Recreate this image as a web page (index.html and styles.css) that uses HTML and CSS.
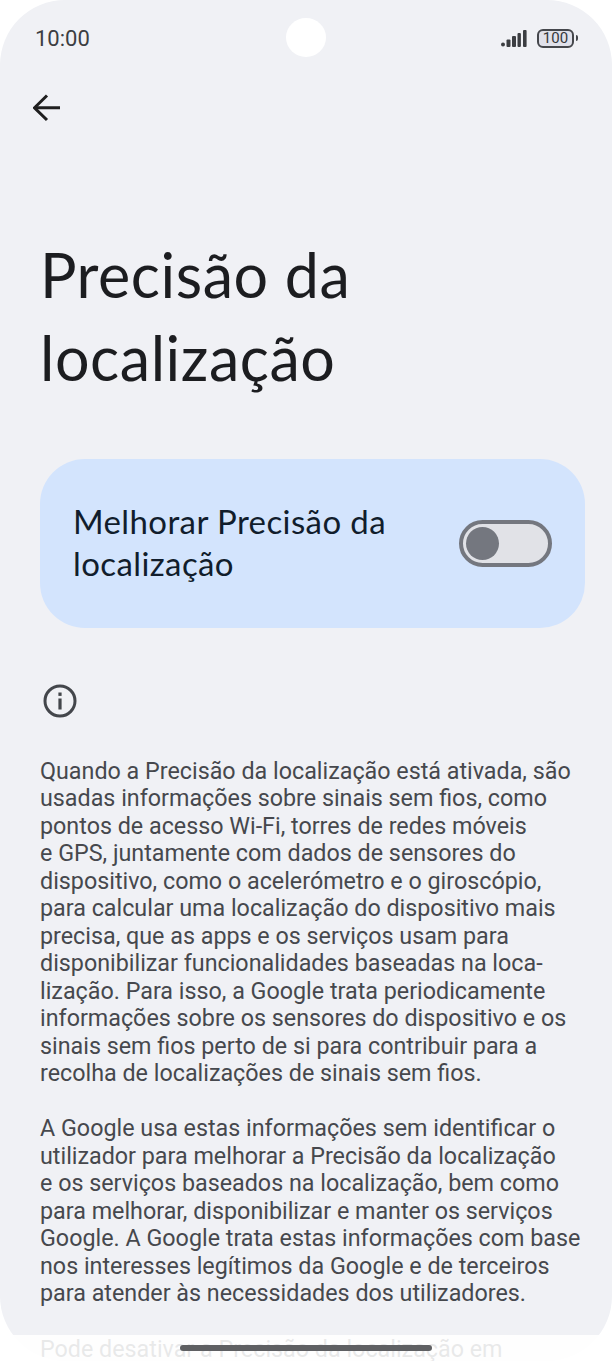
FILE: index.html
```html
<!DOCTYPE html>
<html>

<head>
  <meta charset="utf-8">
  <meta content="width=device-width, initial-scale=1">
  <link rel="stylesheet" href="styles.css">
</head>

<body>
  <div class="screen">
    <div class="statusbar">
      <span class="clock">10:00</span>
      <span class="camera"></span>
      <span class="status-icons">
        <svg class="signal" width="26" height="17" viewBox="0 0 26 17">
          <rect x="0" y="12.5" width="4" height="4" rx="2" />
          <rect x="5.5" y="9.5" width="4" height="7.5" rx="1" />
          <rect x="11" y="6" width="4" height="11" rx="1" />
          <rect x="16.5" y="3" width="3.4" height="14" rx="1" />
          <rect x="22" y="0" width="3.6" height="17" rx="1" />
        </svg>
        <span class="battery"><span class="battery-level">100</span></span>
        <span class="battery-tip"></span>
      </span>
    </div>

    <div class="toolbar">
      <svg width="28" height="28" viewBox="0 0 28 28" fill="none" stroke="#1f1f1f" stroke-width="3">
        <path d="M27 13.8H2" />
        <path d="M14 1.5L1.5 13.8L14 26" />
      </svg>
    </div>

    <h1 class="title">Precisão da<br>localização</h1>

    <div class="card">
      <span class="card-label">Melhorar Precisão da<br>localização</span>
      <span class="switch"><span class="knob"></span></span>
    </div>

    <svg class="info" width="34" height="34" viewBox="0 0 34 34" fill="none">
      <circle cx="17" cy="17" r="15" stroke="#43464b" stroke-width="3" />
      <rect x="15.4" y="14.5" width="3.2" height="11" fill="#43464b" />
      <rect x="15.4" y="8.5" width="3.2" height="3.4" fill="#43464b" />
    </svg>

    <p class="text first">Quando a Precisão da localização está ativada, são<br>
      usadas informações sobre sinais sem fios, como<br>
      pontos de acesso Wi-Fi, torres de redes móveis<br>
      e GPS, juntamente com dados de sensores do<br>
      dispositivo, como o acelerómetro e o giroscópio,<br>
      para calcular uma localização do dispositivo mais<br>
      precisa, que as apps e os serviços usam para<br>
      disponibilizar funcionalidades baseadas na loca-<br>
      lização. Para isso, a Google trata periodicamente<br>
      informações sobre os sensores do dispositivo e os<br>
      sinais sem fios perto de si para contribuir para a<br>
      recolha de localizações de sinais sem fios.</p>

    <p class="text second">A Google usa estas informações sem identificar o<br>
      utilizador para melhorar a Precisão da localização<br>
      e os serviços baseados na localização, bem como<br>
      para melhorar, disponibilizar e manter os serviços<br>
      Google. A Google trata estas informações com base<br>
      nos interesses legítimos da Google e de terceiros<br>
      para atender às necessidades dos utilizadores.</p>

    <p class="text second">Pode desativar a Precisão da localização em</p>
  </div>

  <div class="navbar">
    <div class="homebar"></div>
  </div>
</body>

</html>
```

FILE: styles.css
```css
html, body {
  margin: 0;
  padding: 0;
  background-color: #fff;
  overflow: hidden;
}

body {
  position: relative;
  width: 612px;
  height: 1361px;
  font-family: "Roboto", "Liberation Sans", sans-serif;
}

.screen {
  box-sizing: border-box;
  height: 1361px;
  padding-top: 18px;
  background-color: #f0f1f5;
  border-radius: 65px;
  overflow: hidden;
}

.statusbar {
  display: flex;
  align-items: center;
  justify-content: space-between;
  height: 40px;
  padding: 0 34px 0 35px;
  position: relative;
}

.clock {
  font-size: 22px;
  color: #3c3e42;
}

.camera {
  position: absolute;
  left: 286px;
  top: 0;
  width: 40px;
  height: 39px;
  border-radius: 50%;
  background-color: #fff;
}

.status-icons {
  display: flex;
  align-items: center;
}

.signal {
  fill: #3c3e42;
  margin-right: 10px;
}

.battery {
  box-sizing: border-box;
  display: flex;
  align-items: center;
  justify-content: center;
  width: 37px;
  height: 19px;
  border: 2px solid #45474c;
  border-radius: 6px;
  background-color: #e0e1ea;
}

.battery-level {
  font-size: 15px;
  color: #35373b;
}

.battery-tip {
  width: 2px;
  height: 6px;
  margin-left: 2px;
  border-radius: 0 2px 2px 0;
  background-color: #45474c;
}

.toolbar {
  height: 28px;
  margin-top: 36px;
  padding-left: 33px;
}

.title {
  margin: 111px 0 0 40px;
  font-family: "Lato", "Roboto", sans-serif;
  font-size: 61px;
  font-weight: 400;
  line-height: 83px;
  letter-spacing: 0.55px;
  color: #1c1d20;
}

.card {
  display: flex;
  align-items: center;
  justify-content: space-between;
  box-sizing: border-box;
  height: 169px;
  margin: 60px 27px 0 40px;
  padding: 0 33px;
  background-color: #d3e4fd;
  border-radius: 45px;
}

.card-label {
  padding-bottom: 4px;
  font-family: "Lato", "Roboto", sans-serif;
  font-size: 33px;
  line-height: 42px;
  letter-spacing: 0.4px;
  color: #111d2c;
}

.switch {
  box-sizing: border-box;
  display: flex;
  align-items: center;
  width: 93px;
  height: 47px;
  padding-left: 3px;
  border: 4px solid #74777f;
  border-radius: 24px;
  background-color: #e1e2e7;
}

.knob {
  width: 33px;
  height: 33px;
  border-radius: 50%;
  background-color: #74777f;
}

.info {
  display: block;
  margin: 56px 0 0 43px;
}

.text {
  margin: 0 0 0 40px;
  font-size: 23.3px;
  line-height: 27.45px;
  color: #46484d;
  white-space: nowrap;
}

.first {
  margin-top: 40px;
}

.second {
  margin-top: 28px;
}

/* translucent strip over the bottom of the screen */
.navbar {
  position: absolute;
  left: 0;
  right: 0;
  top: 1335px;
  bottom: 0;
  background-color: rgba(255, 255, 255, 0.88);
}

.homebar {
  width: 252px;
  height: 6px;
  margin: 10px auto 0;
  border-radius: 3px;
  background-color: #5f6063;
}
```
